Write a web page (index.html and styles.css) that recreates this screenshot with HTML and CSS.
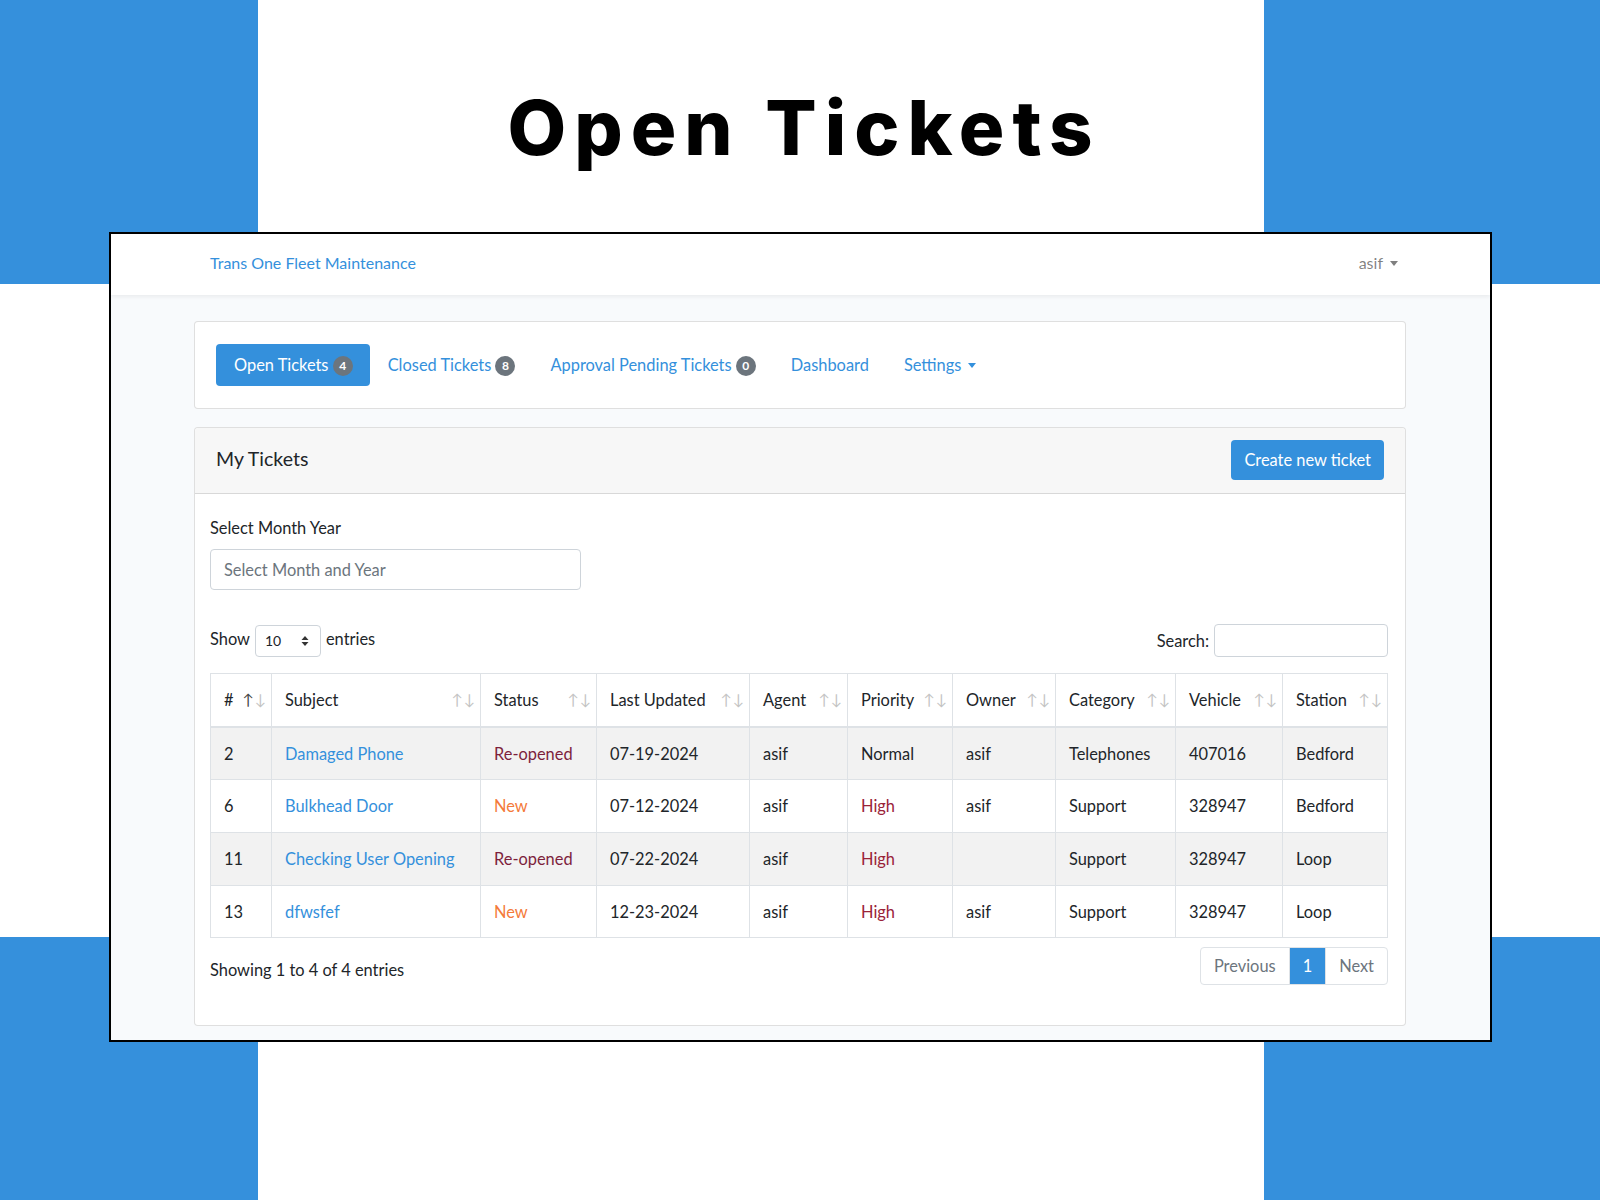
FILE: index.html
```html
<!DOCTYPE html>
<html lang="en">
<head>
  <meta charset="UTF-8" />
  <meta name="viewport" content="width=device-width, initial-scale=1.0"/>
  <title>Open Tickets</title>
  <link rel="stylesheet" href="styles.css">
</head>
<body>
  <h1 class="titulo">Open Tickets</h1>

  <div class="marco">
    <nav class="barra">
      <a class="marca" href="#">Trans One Fleet Maintenance</a>
      <span class="usuario caret">asif</span>
    </nav>

    <main class="contenido">
      <div class="tarjeta menu">
        <a class="pestana activa" href="#">Open Tickets <span class="insignia">4</span></a>
        <a class="pestana" href="#">Closed Tickets <span class="insignia">8</span></a>
        <a class="pestana" href="#">Approval Pending Tickets <span class="insignia">0</span></a>
        <a class="pestana" href="#">Dashboard</a>
        <a class="pestana caret" href="#">Settings</a>
      </div>

      <div class="tarjeta">
        <div class="tarjeta-cabecera">
          <span class="tarjeta-titulo">My Tickets</span>
          <a class="boton" href="#">Create new ticket</a>
        </div>
        <div class="tarjeta-cuerpo">
          <label class="etiqueta">Select Month Year</label>
          <div class="campo">Select Month and Year</div>

          <div class="controles">
            <div class="mostrar">
              Show
              <span class="selector">10
                <svg width="8" height="12" viewBox="0 0 8 12"><path d="M4 1 L7.5 5 H0.5 Z M4 11 L7.5 7 H0.5 Z" fill="#333"/></svg>
              </span>
              entries
            </div>
            <div class="buscar">Search: <span class="caja"></span></div>
          </div>

          <table class="tabla">
            <colgroup>
              <col style="width:61px"><col style="width:209px"><col style="width:116px"><col style="width:153px"><col style="width:98px">
              <col style="width:105px"><col style="width:103px"><col style="width:120px"><col style="width:107px"><col style="width:105px">
            </colgroup>
            <thead>
              <tr>
                <th><div class="th">#<span class="orden"><b class="on">↑</b><b>↓</b></span></div></th>
                <th><div class="th">Subject<span class="orden"><b>↑</b><b>↓</b></span></div></th>
                <th><div class="th">Status<span class="orden"><b>↑</b><b>↓</b></span></div></th>
                <th><div class="th">Last Updated<span class="orden"><b>↑</b><b>↓</b></span></div></th>
                <th><div class="th">Agent<span class="orden"><b>↑</b><b>↓</b></span></div></th>
                <th><div class="th">Priority<span class="orden"><b>↑</b><b>↓</b></span></div></th>
                <th><div class="th">Owner<span class="orden"><b>↑</b><b>↓</b></span></div></th>
                <th><div class="th">Category<span class="orden"><b>↑</b><b>↓</b></span></div></th>
                <th><div class="th">Vehicle<span class="orden"><b>↑</b><b>↓</b></span></div></th>
                <th><div class="th">Station<span class="orden"><b>↑</b><b>↓</b></span></div></th>
              </tr>
            </thead>
            <tbody>
              <tr>
                <td>2</td><td><a href="#">Damaged Phone</a></td><td class="reabierto">Re-opened</td><td>07-19-2024</td><td>asif</td>
                <td>Normal</td><td>asif</td><td>Telephones</td><td>407016</td><td>Bedford</td>
              </tr>
              <tr>
                <td>6</td><td><a href="#">Bulkhead Door</a></td><td class="nuevo">New</td><td>07-12-2024</td><td>asif</td>
                <td class="alta">High</td><td>asif</td><td>Support</td><td>328947</td><td>Bedford</td>
              </tr>
              <tr>
                <td>11</td><td><a href="#">Checking User Opening</a></td><td class="reabierto">Re-opened</td><td>07-22-2024</td><td>asif</td>
                <td class="alta">High</td><td></td><td>Support</td><td>328947</td><td>Loop</td>
              </tr>
              <tr>
                <td>13</td><td><a href="#">dfwsfef</a></td><td class="nuevo">New</td><td>12-23-2024</td><td>asif</td>
                <td class="alta">High</td><td>asif</td><td>Support</td><td>328947</td><td>Loop</td>
              </tr>
            </tbody>
          </table>

          <div class="pie">
            <span class="info">Showing 1 to 4 of 4 entries</span>
            <div class="paginas">
              <span class="pagina">Previous</span>
              <span class="pagina actual">1</span>
              <span class="pagina">Next</span>
            </div>
          </div>
        </div>
      </div>
    </main>
  </div>
</body>
</html>
```

FILE: styles.css
```css
body {
  margin: 0;
  width: 1600px;
  height: 1200px;
  overflow: hidden;
  font-family: 'Lato', 'Noto Sans', sans-serif;
  font-size: 16.4px;
  line-height: 25.6px;
  color: #212529;
  background:
    linear-gradient(#3590dc, #3590dc) left top / 258px 284px no-repeat,
    linear-gradient(#3590dc, #3590dc) right top / 336px 284px no-repeat,
    linear-gradient(#3590dc, #3590dc) left bottom / 258px 263px no-repeat,
    linear-gradient(#3590dc, #3590dc) right bottom / 336px 263px no-repeat,
    #fff;
}

a {
  color: #3490dc;
  text-decoration: none;
}

.titulo {
  margin: 0;
  height: 232px;
  box-sizing: border-box;
  padding-top: 89px;
  padding-left: 8px;
  text-align: center;
  font-family: 'Inter', 'DejaVu Sans', sans-serif;
  font-weight: 800;
  font-size: 76px;
  line-height: 1;
  letter-spacing: 8px;
  color: #000;
}

.marco {
  margin-left: 109px;
  width: 1383px;
  height: 810px;
  box-sizing: border-box;
  border: 2px solid #000;
  background: #f8fafc;
  overflow: hidden;
}

.barra {
  height: 61px;
  background: #fff;
  box-shadow: 0 2px 4px rgba(0, 0, 0, 0.06);
  display: flex;
  align-items: center;
  justify-content: space-between;
  padding: 0 92px 0 99px;
  position: relative;
}

.marca {
  font-size: 16px;
  margin-top: -3px;
}

.usuario {
  color: rgba(0, 0, 0, 0.5);
  font-size: 16px;
  margin-top: -3px;
}

.caret::after {
  content: "";
  display: inline-block;
  margin-left: 7px;
  vertical-align: 3px;
  border-top: 5px solid;
  border-left: 4px solid transparent;
  border-right: 4px solid transparent;
}

.contenido {
  padding: 26px 84px 0 83px;
}

.tarjeta {
  background: #fff;
  border: 1px solid rgba(0, 0, 0, 0.125);
  border-radius: 4px;
}

.menu {
  display: flex;
  align-items: center;
  padding: 22px 21px;
  margin-bottom: 18px;
}

.pestana {
  padding: 8px 17px 8px 18px;
  border-radius: 4px;
}

.pestana.activa {
  background: #3490dc;
  color: #fff;
}

.insignia {
  display: inline-block;
  min-width: 20px;
  height: 20px;
  box-sizing: border-box;
  padding: 0 5px;
  border-radius: 10px;
  background: #6c757d;
  color: #fff;
  font-size: 12px;
  font-weight: 700;
  line-height: 20px;
  text-align: center;
  vertical-align: 1px;
}

.tarjeta-cabecera {
  height: 66px;
  box-sizing: border-box;
  display: flex;
  align-items: center;
  justify-content: space-between;
  padding: 0 21px 0 21px;
  background: #f7f7f7;
  border-bottom: 1px solid rgba(0, 0, 0, 0.125);
  border-radius: 4px 4px 0 0;
}

.tarjeta-titulo {
  font-size: 19.5px;
  margin-top: -3px;
}

.boton {
  background: #3490dc;
  color: #fff;
  padding: 7px 13px;
  border-radius: 4px;
}

.tarjeta-cuerpo {
  padding: 21px 17px 40px 15px;
}

.etiqueta {
  display: block;
  margin-bottom: 9px;
}

.campo {
  width: 371px;
  height: 41px;
  box-sizing: border-box;
  border: 1px solid #ced4da;
  border-radius: 4px;
  padding: 7px 13px;
  color: #6c757d;
}

.controles {
  display: flex;
  justify-content: space-between;
  align-items: center;
  margin-top: 34px;
  margin-bottom: 16px;
}

.mostrar, .buscar {
  display: flex;
  align-items: center;
  gap: 5px;
}

.mostrar {
  margin-top: -4px;
}

.selector {
  display: inline-flex;
  align-items: center;
  justify-content: space-between;
  width: 66px;
  height: 32px;
  box-sizing: border-box;
  padding: 0 11px 0 9px;
  margin-top: 4px;
  border: 1px solid #ced4da;
  border-radius: 4px;
  font-size: 14px;
}

.caja {
  width: 174px;
  height: 33px;
  box-sizing: border-box;
  border: 1px solid #ced4da;
  border-radius: 4px;
}

.tabla {
  width: 1177px;
  table-layout: fixed;
  border-collapse: collapse;
  border: 1px solid #dee2e6;
}

.tabla th, .tabla td {
  border: 1px solid #dee2e6;
  padding: 13px 13px;
  text-align: left;
  white-space: nowrap;
}

.tabla th {
  font-weight: 400;
  padding: 13px 5px 13px 13px;
  border-bottom: 2px solid #dee2e6;
}

.th {
  display: flex;
  justify-content: space-between;
  align-items: center;
}

.orden {
  display: flex;
  gap: 1px;
  font-size: 15px;
}

.orden b {
  font-weight: 400;
  color: #c4c4c4;
}

.orden b.on {
  color: #444;
}

.tabla tbody tr:nth-child(odd) {
  background: #f2f2f2;
}

.reabierto { color: #7d1f3c; }
.nuevo { color: #f47a3a; }
.alta { color: #9a2338; }

.pie {
  display: flex;
  justify-content: space-between;
  align-items: center;
  margin-top: 9px;
}

.info {
  margin-top: 7px;
}

.paginas {
  display: flex;
  border: 1px solid #dee2e6;
  border-radius: 4px;
}

.pagina {
  padding: 5px 13px;
  color: #6c757d;
}

.pagina + .pagina {
  border-left: 1px solid #dee2e6;
}

.pagina.actual {
  background: #3490dc;
  color: #fff;
}
```
